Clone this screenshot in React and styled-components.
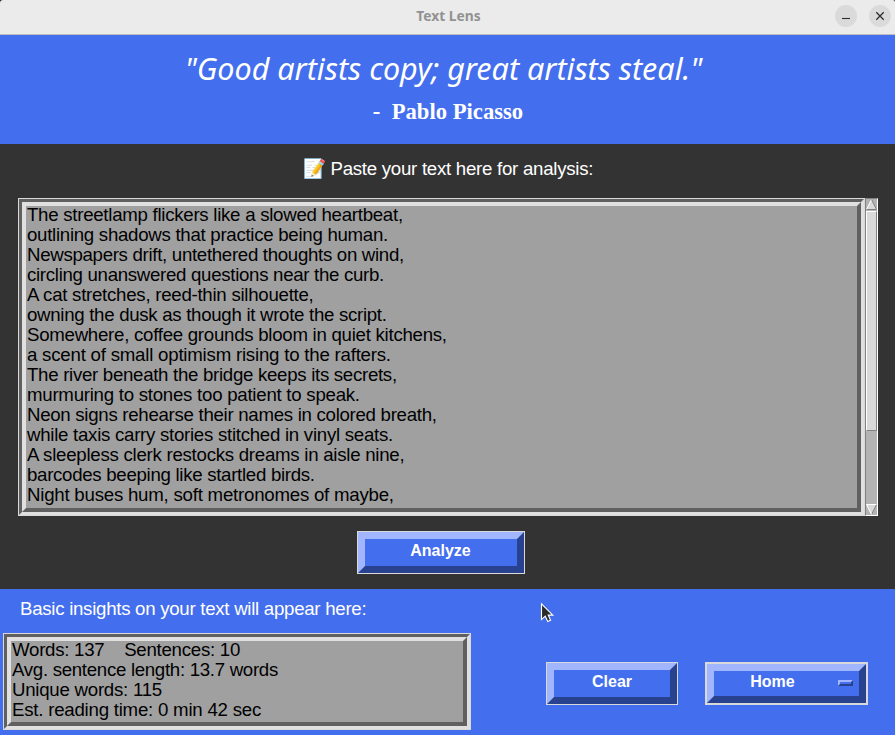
import React from 'react';
import styled, { createGlobalStyle } from 'styled-components';

const BLUE = '#436eee';
const BLUE_LIGHT = '#a1b6ff';
const BLUE_DARK = '#28428f';

const Global = createGlobalStyle`
  * { box-sizing: border-box; }
  html, body { margin: 0; padding: 0; background: #333333; }
  body { font-family: "Liberation Sans", Arial, sans-serif; overflow: hidden; }
`;

const Window = styled.div`
  position: relative;
  width: 895px;
  height: 735px;
  display: flex;
  flex-direction: column;
  background: #1a2624;
`;

const TitleBar = styled.header`
  height: 35px;
  flex: none;
  background: #ebebeb;
  border-bottom: 1px solid #bdbdbd;
  border-radius: 3px 2px 0 0;
  display: grid;
  grid-template-columns: 1fr auto 1fr;
  align-items: center;
  padding: 0 4px 2px 6px;
`;

const Title = styled.h1`
  grid-column: 2;
  margin: 0;
  font: 700 13.8px/20px "Noto Sans", sans-serif;
  color: #929292;
`;

const WindowControls = styled.div`
  display: flex;
  justify-content: flex-end;
  gap: 12px;
`;

const ControlButton = styled.button`
  width: 22px;
  height: 22px;
  padding: 0;
  border: 0;
  border-radius: 50%;
  background: #dadada;

  svg { display: block; }
`;

const Banner = styled.section`
  height: 109px;
  flex: none;
  background: ${BLUE};
  color: #fff;
  display: flex;
  flex-direction: column;
  align-items: center;
  white-space: pre;
`;

const Quote = styled.p`
  margin: 13px 8px 0 0;
  font: italic 400 30.5px/40px "Noto Sans", sans-serif;
`;

const Author = styled.p`
  margin: 11px 0 0 1px;
  font: 700 22.65px/26px "Liberation Serif", serif;
`;

const Composer = styled.main`
  height: 445px;
  flex: none;
  padding: 0 17px 0 18px;
  display: flex;
  flex-direction: column;
  align-items: center;
  background: #333333;
`;

const Prompt = styled.label`
  height: 54px;
  padding-top: 14px;
  color: #fff;
  font-size: 18.67px;
  line-height: 22px;
  letter-spacing: -0.265px;
  white-space: pre;
`;

const Editor = styled.div`
  width: 860px;
  height: 318px;
  display: flex;
`;

const FocusRing = styled.div`
  width: ${p => p.$w}px;
  height: ${p => p.$h}px;
  flex: none;
  border: 1px solid #d9d9d9;
`;

const GrooveOuter = styled.div`
  height: 100%;
  border: 3px solid;
  border-color: #606060 #e0e0e0 #e0e0e0 #606060;
`;

const GrooveInner = styled.div`
  height: 100%;
  border: 4px solid;
  border-color: #e0e0e0 #606060 #606060 #e0e0e0;
  background: #a0a0a0;
  padding-left: 1px;
  overflow: hidden;
`;

const Line = styled.div`
  height: 20px;
  font-size: 18.67px;
  line-height: 18px;
  letter-spacing: ${p => p.$tracking}px;
  white-space: pre;
  color: #000;
`;

const ScrollTrack = styled.div`
  width: 13px;
  height: 318px;
  display: flex;
  flex-direction: column;
  border: 1px solid;
  border-color: #828282 #ffffff #ffffff #828282;
  background: #b3b3b3;

  svg { display: block; flex: none; }
`;

const ScrollThumb = styled.div`
  height: 220px;
  margin: 1px 0 auto;
  border: 1px solid;
  border-color: #ffffff #828282 #828282 #ffffff;
  background: #d9d9d9;
`;

const BevelButton = styled.button`
  width: ${p => p.$w}px;
  height: 43px;
  flex: none;
  margin: 0;
  padding: 0;
  border: ${p => p.$ring || 1}px solid #d9d9d9;
  background: none;
  font: 700 16px/24px "Liberation Sans", Arial, sans-serif;
  color: #fff;
`;

const BevelFace = styled.span`
  display: flex;
  height: 100%;
  align-items: center;
  border: 7px solid;
  border-color: ${BLUE_LIGHT} ${BLUE_DARK} ${BLUE_DARK} ${BLUE_LIGHT};
  background: ${BLUE};
`;

const ButtonLabel = styled.span`
  flex: 1;
  text-align: center;
  padding-bottom: 3px;
`;

const MenuIndicator = styled.span`
  width: 15px;
  height: 6px;
  margin: 0 6px 1px 7px;
  border: 2px solid;
  border-color: ${BLUE_LIGHT} ${BLUE_DARK} ${BLUE_DARK} ${BLUE_LIGHT};
`;

const Actions = styled.div`
  margin: 15px 15px 0 0;
  display: flex;
`;

const Footer = styled.footer`
  height: 146px;
  flex: none;
  display: flex;
  background: ${BLUE};
`;

const Insights = styled.section`
  width: 546px;
  padding-left: 3px;
`;

const InsightsLabel = styled.h2`
  margin: 0;
  height: 44px;
  padding: 9px 0 0 17px;
  font-size: 18.67px;
  line-height: 22px;
  font-weight: 400;
  letter-spacing: -0.277px;
  color: #fff;
  white-space: pre;
`;

const FooterActions = styled.nav`
  display: flex;
  gap: 27px;
  padding-top: 73px;
`;

const Pointer = styled.svg`
  position: absolute;
  left: 540px;
  top: 602px;
  pointer-events: none;
`;

const lines = [
  ['The streetlamp flickers like a slowed heartbeat,', -0.272],
  ['outlining shadows that practice being human.', -0.283],
  ['Newspapers drift, untethered thoughts on wind,', -0.307],
  ['circling unanswered questions near the curb.', -0.302],
  ['A cat stretches, reed-thin silhouette,', -0.265],
  ['owning the dusk as though it wrote the script.', -0.298],
  ['Somewhere, coffee grounds bloom in quiet kitchens,', -0.268],
  ['a scent of small optimism rising to the rafters.', -0.218],
  ['The river beneath the bridge keeps its secrets,', -0.296],
  ['murmuring to stones too patient to speak.', -0.256],
  ['Neon signs rehearse their names in colored breath,', -0.29],
  ['while taxis carry stories stitched in vinyl seats.', -0.272],
  ['A sleepless clerk restocks dreams in aisle nine,', -0.26],
  ['barcodes beeping like startled birds.', -0.296],
  ['Night buses hum, soft metronomes of maybe,', -0.228],
];

const stats = [
  ['Words: 137    Sentences: 10', -0.26],
  ['Avg. sentence length: 13.7 words', -0.3],
  ['Unique words: 115', -0.25],
  ['Est. reading time: 0 min 42 sec', -0.23],
];

function TextPanel({ width, height, rows }) {
  return (
    <FocusRing $w={width} $h={height}>
      <GrooveOuter>
        <GrooveInner>
          {rows.map(([text, tracking]) => (
            <Line key={text} $tracking={tracking}>{text}</Line>
          ))}
        </GrooveInner>
      </GrooveOuter>
    </FocusRing>
  );
}

function Scrollbar() {
  return (
    <ScrollTrack>
      <svg width="11" height="11" viewBox="0 0 11 11">
        <path d="M5.5 0.5 L10.5 10.5 H0.5 Z" fill="#d9d9d9" />
        <path d="M0.5 10.5 L5.5 0.5" stroke="#fff" fill="none" />
        <path d="M5.5 0.5 L10.5 10.5 H0.5" stroke="#828282" fill="none" />
      </svg>
      <ScrollThumb />
      <svg width="11" height="11" viewBox="0 0 11 11">
        <path d="M0.5 0.5 H10.5 L5.5 10.5 Z" fill="#d9d9d9" />
        <path d="M10.5 0.5 L5.5 10.5" stroke="#828282" fill="none" />
        <path d="M10.5 0.5 H0.5 L5.5 10.5" stroke="#fff" fill="none" />
      </svg>
    </ScrollTrack>
  );
}

export default function App() {
  return (
    <Window>
      <Global />
      <TitleBar>
        <Title>Text Lens</Title>
        <WindowControls>
          <ControlButton aria-label="Minimize">
            <svg width="22" height="22" viewBox="0 0 22 22">
              <path d="M7 13.5 H15" stroke="#2e2e2e" strokeWidth="1.1" />
            </svg>
          </ControlButton>
          <ControlButton aria-label="Close">
            <svg width="22" height="22" viewBox="0 0 22 22">
              <path d="M7.3 7.3 L14.7 14.7 M14.7 7.3 L7.3 14.7" stroke="#2e2e2e" strokeWidth="1.3" />
            </svg>
          </ControlButton>
        </WindowControls>
      </TitleBar>
      <Banner>
        <Quote>"Good artists copy; great artists steal."</Quote>
        <Author>-  Pablo Picasso</Author>
      </Banner>
      <Composer>
        <Prompt>📝 Paste your text here for analysis:</Prompt>
        <Editor>
          <TextPanel width={847} height={318} rows={lines} />
          <Scrollbar />
        </Editor>
        <Actions>
          <BevelButton $w={168}>
            <BevelFace><ButtonLabel>Analyze</ButtonLabel></BevelFace>
          </BevelButton>
        </Actions>
      </Composer>
      <Footer>
        <Insights>
          <InsightsLabel>Basic insights on your text will appear here:</InsightsLabel>
          <TextPanel width={468} height={97} rows={stats} />
        </Insights>
        <FooterActions>
          <BevelButton $w={132}>
            <BevelFace><ButtonLabel>Clear</ButtonLabel></BevelFace>
          </BevelButton>
          <BevelButton $w={163} $ring={2}>
            <BevelFace>
              <ButtonLabel>Home</ButtonLabel>
              <MenuIndicator />
            </BevelFace>
          </BevelButton>
        </FooterActions>
      </Footer>
      <Pointer width="16" height="22" viewBox="0 0 16 22">
        <path
          d="M1.5 1.8 V17.6 L5.2 14.2 L7.8 19.6 L10.6 18.3 L8.2 13.1 H12.8 Z"
          fill="#2b2b2b"
          stroke="#fff"
          strokeWidth="1.1"
        />
      </Pointer>
    </Window>
  );
}
